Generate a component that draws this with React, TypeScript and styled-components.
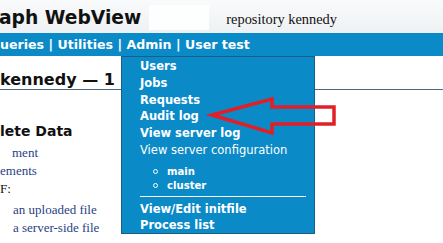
import React from "react";
import styled, { createGlobalStyle } from "styled-components";

const GlobalStyle = createGlobalStyle`
  html, body { margin: 0; padding: 0; background: #ffffff; overflow: hidden; }
  #root { width: 443px; height: 243px; }
`;

const Page = styled.div`
  position: relative;
  width: 443px;
  height: 243px;
  overflow: hidden;
  background: #ffffff;
`;

const Header = styled.header`
  height: 33px;
  display: flex;
  align-items: flex-start;
  background: linear-gradient(#f9fafb, #eef1f3);
`;

const Title = styled.h1`
  margin: 7px 0 0 -1px;
  font-family: "DejaVu Sans", Verdana, sans-serif;
  font-weight: bold;
  font-size: 18.7px;
  line-height: 22px;
  color: #111;
  white-space: nowrap;
`;

const LogoSpace = styled.div`
  width: 60px;
  height: 25px;
  margin: 5px 0 0 8px;
  background: #fdfefe;
`;

const Repo = styled.div`
  margin: 10px 0 0 17px;
  font-family: "Liberation Serif", "Times New Roman", serif;
  font-size: 14.4px;
  line-height: 18px;
  color: #111;
  white-space: nowrap;
`;

const Nav = styled.nav`
  height: 23px;
  display: flex;
  align-items: center;
  background: #0b8ac8;
  color: #ffffff;
  font-family: "DejaVu Sans", Verdana, sans-serif;
  font-weight: bold;
  font-size: 12.6px;
  white-space: pre;
`;

const Body = styled.main`
  position: relative;
  height: 187px;
`;

const Heading = styled.h2`
  margin: 0;
  padding-top: 14px;
  font-family: "DejaVu Sans", Verdana, sans-serif;
  font-weight: bold;
  font-size: 16px;
  line-height: 19px;
  color: #111;
  border-bottom: 1px solid #4a6985;
  white-space: nowrap;
`;

const SectionTitle = styled.h3`
  margin: 32px 0 0 0;
  font-family: "DejaVu Sans", Verdana, sans-serif;
  font-weight: bold;
  font-size: 14px;
  line-height: 18px;
  color: #111;
`;

const Lines = styled.div<{ $gap?: number }>`
  margin-top: ${(p) => p.$gap ?? 0}px;
  display: flex;
  flex-direction: column;
`;

const Line = styled.div<{ $indent?: number; $plain?: boolean }>`
  padding-left: ${(p) => p.$indent ?? 0}px;
  font-family: "Liberation Serif", "Times New Roman", serif;
  font-size: 13px;
  line-height: 18px;
  color: ${(p) => (p.$plain ? "#111" : "#1f3f86")};
  white-space: nowrap;
`;

const Menu = styled.div`
  position: absolute;
  left: 121px;
  top: 0;
  width: 192px;
  height: 175px;
  padding-top: 1px;
  border: 1px solid #1d5d85;
  background: #0b8ac8;
  color: #ffffff;
  font-family: "DejaVu Sans", Verdana, sans-serif;
  box-sizing: content-box;
`;

const MenuItem = styled.div<{ $plain?: boolean; $lh?: number }>`
  padding-left: 18px;
  font-size: 11.5px;
  font-weight: ${(p) => (p.$plain ? "normal" : "bold")};
  line-height: ${(p) => p.$lh ?? 16.8}px;
  white-space: nowrap;
`;

const SubList = styled.ul`
  list-style: none;
  margin: 6px 0 0 0;
  padding: 0 0 0 31px;
`;

const SubItem = styled.li`
  display: flex;
  align-items: center;
  font-size: 10.1px;
  font-weight: bold;
  line-height: 14px;
`;

const Bullet = styled.span`
  width: 3px;
  height: 3px;
  border: 1px solid #ffffff;
  border-radius: 50%;
  margin-right: 9px;
`;

const Separator = styled.hr`
  margin: 3px 0 4px 18px;
  width: 166px;
  height: 0;
  border: none;
  border-top: 1px solid #ffffff;
`;

const ArrowLayer = styled.svg`
  position: absolute;
  left: 0;
  top: 0;
  pointer-events: none;
`;

export default function App() {
  return (
    <>
      <GlobalStyle />
      <Page>
        <Header>
          <Title>aph WebView</Title>
          <LogoSpace />
          <Repo>repository kennedy</Repo>
        </Header>
        <Nav>{"ueries | Utilities | Admin | User test"}</Nav>
        <Body>
          <Heading>kennedy — 1</Heading>
          <SectionTitle>lete Data</SectionTitle>
          <Lines $gap={4}>
            <Line $indent={12}>ment</Line>
            <Line>ements</Line>
            <Line $plain>F:</Line>
          </Lines>
          <Lines $gap={3}>
            <Line $indent={13}>an uploaded file</Line>
            <Line $indent={13}>a server-side file</Line>
          </Lines>
          <Menu>
            <MenuItem>Users</MenuItem>
            <MenuItem>Jobs</MenuItem>
            <MenuItem>Requests</MenuItem>
            <MenuItem>Audit log</MenuItem>
            <MenuItem>View server log</MenuItem>
            <MenuItem $plain>View server configuration</MenuItem>
            <SubList>
              <SubItem>
                <Bullet />
                main
              </SubItem>
              <SubItem>
                <Bullet />
                cluster
              </SubItem>
            </SubList>
            <Separator />
            <MenuItem $lh={16}>View/Edit initfile</MenuItem>
            <MenuItem $lh={16}>Process list</MenuItem>
          </Menu>
        </Body>
        <ArrowLayer width="443" height="243" viewBox="0 0 443 243">
          <polygon
            points="212,115 272,99 272,107 334,107 334,124 272,124 272,133"
            fill="none"
            stroke="#e21f26"
            strokeWidth="3.5"
            strokeLinejoin="miter"
          />
        </ArrowLayer>
      </Page>
    </>
  );
}
